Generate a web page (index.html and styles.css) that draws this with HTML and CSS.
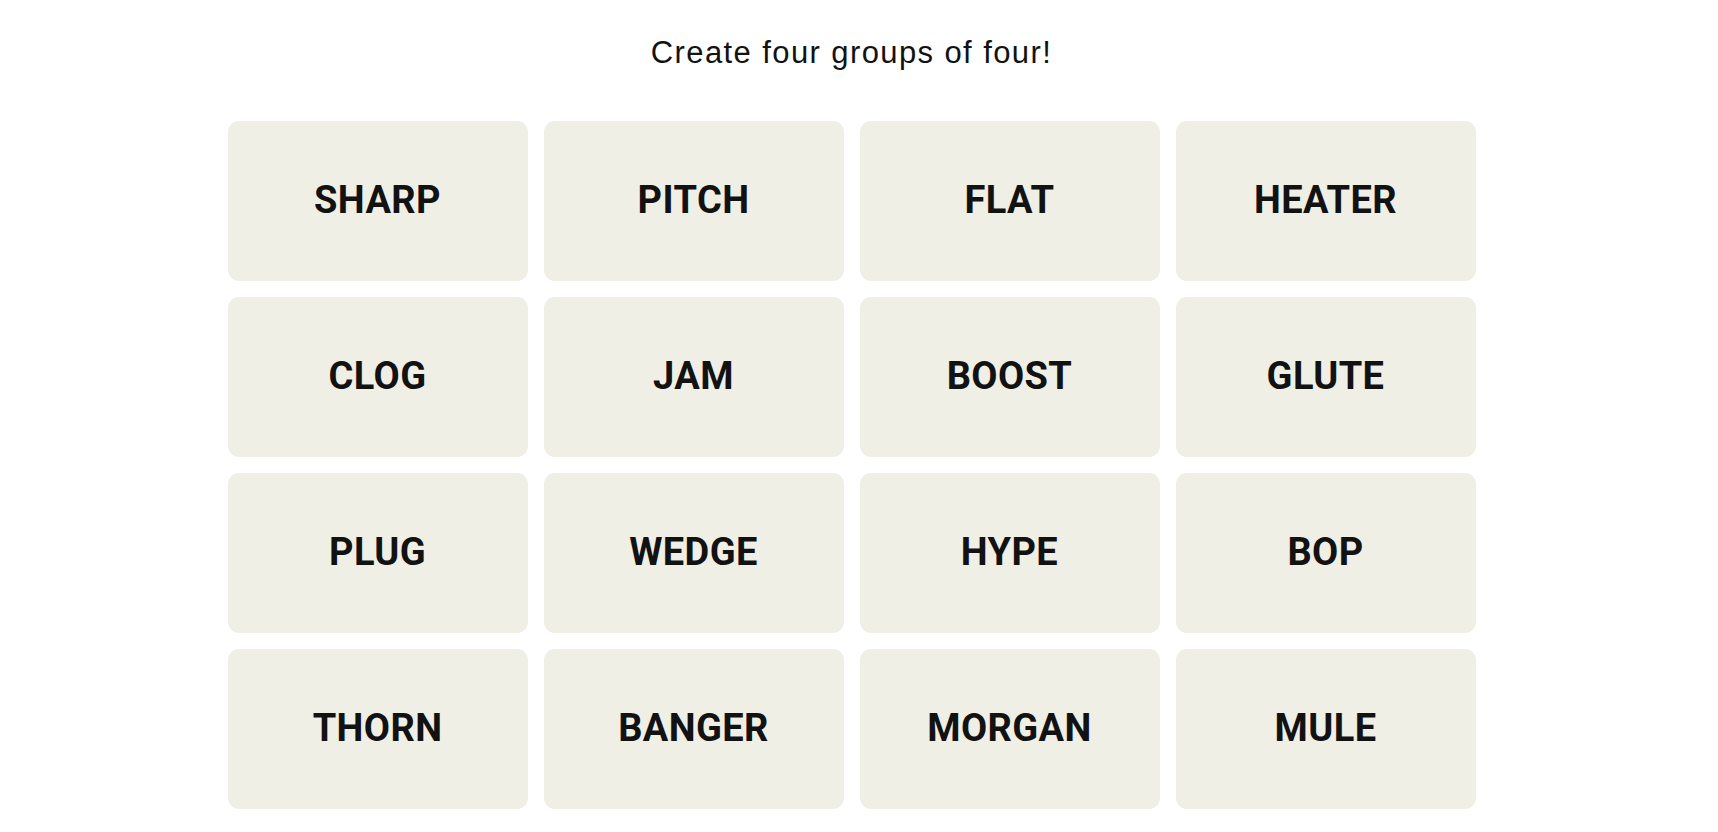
FILE: index.html
```html
<!DOCTYPE html>
<html lang="en">
<head>
<meta charset="utf-8">
<title>Connections</title>
<link rel="stylesheet" href="styles.css">
</head>
<body>
<main class="game">
  <h2 class="prompt">Create four groups of four!</h2>
  <div class="board">
    <div class="tile">SHARP</div>
    <div class="tile">PITCH</div>
    <div class="tile">FLAT</div>
    <div class="tile">HEATER</div>
    <div class="tile">CLOG</div>
    <div class="tile">JAM</div>
    <div class="tile">BOOST</div>
    <div class="tile">GLUTE</div>
    <div class="tile">PLUG</div>
    <div class="tile">WEDGE</div>
    <div class="tile">HYPE</div>
    <div class="tile">BOP</div>
    <div class="tile">THORN</div>
    <div class="tile">BANGER</div>
    <div class="tile">MORGAN</div>
    <div class="tile">MULE</div>
  </div>
</main>
</body>
</html>
```
FILE: styles.css
```css
html, body {
  margin: 0;
  padding: 0;
  background: #ffffff;
}

.game {
  display: flex;
  flex-direction: column;
  align-items: center;
  width: 1703px;
  padding-top: 35px;
}

.prompt {
  margin: 0;
  font-family: "Liberation Sans", Arial, sans-serif;
  font-weight: 400;
  font-size: 31px;
  line-height: 36px;
  letter-spacing: 1.4px;
  color: #121212;
}

.board {
  margin-top: 50px;
  display: grid;
  grid-template-columns: repeat(4, 300px);
  grid-auto-rows: 160px;
  gap: 16px;
}

.tile {
  display: flex;
  align-items: center;
  justify-content: center;
  padding-bottom: 2px;
  box-sizing: border-box;
  background: #efefe6;
  border-radius: 11px;
  font-family: Roboto, "Liberation Sans", sans-serif;
  font-weight: 700;
  font-size: 38px;
  letter-spacing: 0.4px;
  color: #121212;
  text-transform: uppercase;
}
```
